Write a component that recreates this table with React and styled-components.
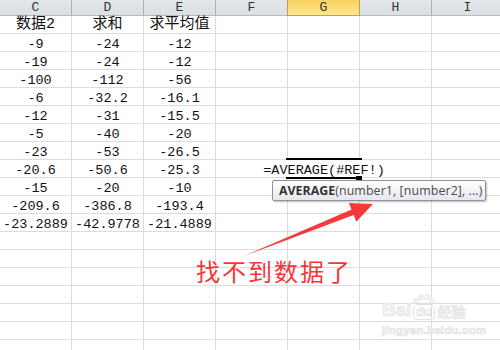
import React from 'react';
import styled, { createGlobalStyle } from 'styled-components';

const GlobalStyle = createGlobalStyle`
  html, body {
    margin: 0;
    padding: 0;
    background: #fff;
    overflow: hidden;
  }
`;

const Sheet = styled.div`
  position: relative;
  width: 500px;
  height: 350px;
  overflow: hidden;
  background: #fff;
`;

const Row = styled.div`
  display: grid;
  grid-template-columns: repeat(7, 72px);
  width: 504px;
`;

const ColHeader = styled.div`
  box-sizing: border-box;
  height: 16px;
  border-right: 1px solid ${(p) => (p.$active ? '#c79d45' : '#aab0b7')};
  border-bottom: 1px solid ${(p) => (p.$active ? '#c79d45' : '#b6bbc1')};
  background: ${(p) =>
    p.$active ? 'linear-gradient(#f9d163, #ffe78e)' : 'linear-gradient(#e2e5ea, #dcdfe4)'};
  box-shadow: ${(p) => (p.$active ? '-1px 0 0 #c79d45' : 'none')};
  font-family: 'Liberation Mono', monospace;
  font-size: 13px;
  line-height: 15px;
  color: #333;
  text-align: center;
`;

const Cell = styled.div`
  box-sizing: border-box;
  height: 18px;
  border-right: 1px solid #dadcdd;
  border-bottom: 1px solid #dadcdd;
  padding-top: ${(p) => (p.$label ? '1px' : '3px')};
  font-family: 'Liberation Mono', 'Noto Sans CJK SC', monospace;
  font-size: ${(p) => (p.$label ? '15px' : '13.5px')};
  line-height: ${(p) => (p.$label ? '16px' : '15px')};
  color: #111;
  text-align: center;
  white-space: nowrap;
`;

const EditText = styled.div`
  position: absolute;
  left: 262px;
  top: 160px;
  width: 124px;
  height: 17px;
  box-sizing: border-box;
  padding-top: 3px;
  background: #fff;
  font-family: 'Liberation Mono', monospace;
  font-size: 13.5px;
  line-height: 15px;
  color: #111;
  text-align: center;
  white-space: nowrap;
`;

const ActiveBorder = styled.div`
  position: absolute;
  left: 286px;
  top: 158px;
  width: 76px;
  height: 21px;
  box-sizing: border-box;
  border-top: 2px solid #000;
  border-bottom: 2px solid #000;
`;

const FillHandle = styled.div`
  position: absolute;
  left: 356px;
  top: 176px;
  width: 6px;
  height: 6px;
  background: #000;
`;

const Tooltip = styled.div`
  position: absolute;
  left: 272px;
  top: 180px;
  width: 214px;
  height: 21px;
  box-sizing: border-box;
  padding-left: 6px;
  border: 1px solid #8f9297;
  border-radius: 2px;
  background: linear-gradient(#ffffff, #e6e7ef);
  box-shadow: 1px 1px 2px rgba(0, 0, 0, 0.25);
  font-family: 'Open Sans', sans-serif;
  font-size: 12.4px;
  line-height: 19px;
  letter-spacing: 0.1px;
  color: #4a4a4a;
  white-space: nowrap;
`;

const FnName = styled.b`
  font-weight: 700;
  letter-spacing: 0;
  color: #333;
`;

const ArrowLayer = styled.svg`
  position: absolute;
  left: 0;
  top: 0;
  pointer-events: none;
`;

const Note = styled.div`
  position: absolute;
  left: 196px;
  top: 258px;
  font-family: 'Noto Sans CJK SC', sans-serif;
  font-size: 24px;
  line-height: 26px;
  letter-spacing: 2px;
  color: #fa3338;
  white-space: nowrap;
`;

const Watermark = styled.div`
  position: absolute;
  left: 382px;
  top: 294px;
  display: flex;
  flex-direction: column;
  align-items: flex-start;
  color: #f3f3f3;
  -webkit-text-stroke: 0.6px #e0e0e0;
  pointer-events: none;
`;

const BrandLine = styled.div`
  display: flex;
  align-items: flex-end;
  gap: 1px;
  font-family: 'Liberation Sans', sans-serif;
  font-weight: 700;
`;

const BrandWord = styled.span`
  font-size: 19px;
  line-height: 20px;
`;

const Paw = styled.span`
  display: inline-flex;
  flex-direction: column;
  align-items: center;
`;

const PawPad = styled.span`
  font-size: 13px;
  line-height: 14px;
  padding: 0 2px;
  border: 1px solid #e2e2e2;
  border-radius: 6px 6px 4px 4px;
`;

const BrandCn = styled.span`
  font-family: 'Noto Sans CJK SC', sans-serif;
  font-size: 14px;
  line-height: 18px;
  margin-left: 2px;
`;

const SiteUrl = styled.div`
  margin-top: 4px;
  font-family: 'Liberation Sans', sans-serif;
  font-weight: 700;
  font-size: 11.5px;
  line-height: 12px;
  letter-spacing: 0.2px;
`;

const columns = ['C', 'D', 'E', 'F', 'G', 'H', 'I'];

const data = [
  ['数据2', '求和', '求平均值'],
  ['-9', '-24', '-12'],
  ['-19', '-24', '-12'],
  ['-100', '-112', '-56'],
  ['-6', '-32.2', '-16.1'],
  ['-12', '-31', '-15.5'],
  ['-5', '-40', '-20'],
  ['-23', '-53', '-26.5'],
  ['-20.6', '-50.6', '-25.3'],
  ['-15', '-20', '-10'],
  ['-209.6', '-386.8', '-193.4'],
  ['-23.2889', '-42.9778', '-21.4889'],
];

const ROWS = 19;

const App = () => {
  const rows = Array.from({ length: ROWS }, (_, i) => data[i] || []);

  return (
    <>
      <GlobalStyle />
      <Sheet>
        <Row>
          {columns.map((c) => (
            <ColHeader key={c} $active={c === 'G'}>{c}</ColHeader>
          ))}
        </Row>
        {rows.map((vals, r) => (
          <Row key={r}>
            {columns.map((c, ci) => (
              <Cell key={c} $label={r === 0}>{vals[ci] || ''}</Cell>
            ))}
          </Row>
        ))}

        <ActiveBorder />
        <EditText>=AVERAGE(#REF!)</EditText>
        <FillHandle />
        <Tooltip>
          <FnName>AVERAGE</FnName>(number1, [number2], ...)
        </Tooltip>

        <ArrowLayer width="500" height="350" viewBox="0 0 500 350">
          <polygon
            points="244,256 353.7,215 356.3,221.8 373,204 348.9,202.9 351.5,209.4"
            fill="#f63a3a"
          />
        </ArrowLayer>
        <Note>找不到数据了</Note>

        <Watermark>
          <BrandLine>
            <BrandWord>Bai</BrandWord>
            <Paw>
              <svg width="22" height="10" viewBox="0 0 22 10">
                <g fill="#f3f3f3" stroke="#e0e0e0" strokeWidth="0.8">
                  <ellipse cx="3" cy="7" rx="2.2" ry="2.6" />
                  <ellipse cx="8" cy="3.2" rx="2.2" ry="2.8" />
                  <ellipse cx="14" cy="3.2" rx="2.2" ry="2.8" />
                  <ellipse cx="19" cy="7" rx="2.2" ry="2.6" />
                </g>
              </svg>
              <PawPad>du</PawPad>
            </Paw>
            <BrandCn>经验</BrandCn>
          </BrandLine>
          <SiteUrl>jingyan.baidu.com</SiteUrl>
        </Watermark>
      </Sheet>
    </>
  );
};

export default App;
